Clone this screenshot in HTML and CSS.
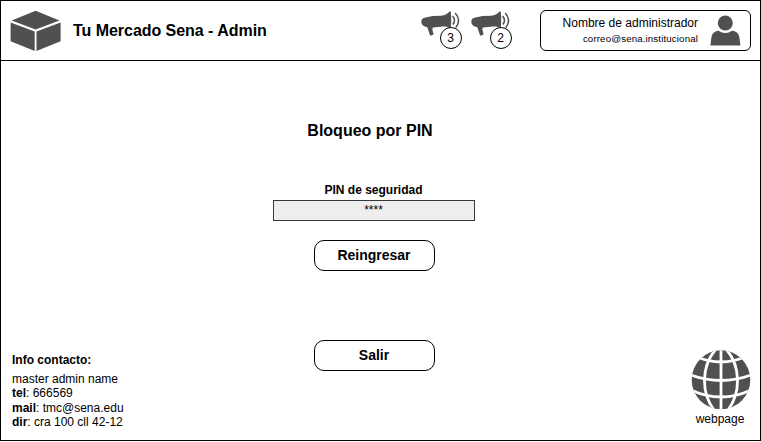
FILE: index.html
```html
<!DOCTYPE html>
<html lang="es">
<head>
<meta charset="utf-8">
<title>Tu Mercado Sena - Admin</title>
<link rel="stylesheet" href="styles.css">
</head>
<body>
<div class="frame">
  <header class="header">
    <svg class="logo" width="52" height="42" viewBox="0 0 52 42">
      <path d="M25.6 .7 49.500 10.400 25.6 19.400 1.700 10.400zM.6 12.400 24.700 21.400V40.900L.6 31.200zM26.500 21.400 50.600 12.400V31.200L26.500 40.900z"/>
    </svg>
    <h1 class="brand">Tu Mercado Sena - Admin</h1>
    <div class="alerts">
      <div class="alert">
        <svg class="horn" width="40" height="26" viewBox="0 0 40 26"><use href="#horn"/></svg>
        <span class="count">3</span>
      </div>
      <div class="alert">
        <svg class="horn" width="40" height="26" viewBox="0 0 40 26">
          <g id="horn">
            <path d="M28.800 .3C29.800 0 30.200 2 30.200 8.700S29.800 17.200 28.800 16.800C26.500 15.600 24.500 15.300 22 15.500L11.800 16.400 11.300 18.600 12.700 23.600 9.200 24.700 6.300 16.200C2.800 15.700 .5 13.800 .3 11.200.1 8.500 1.600 7.200 4.500 6.600L11.700 5.100 20 4.800C24 4.600 27 2.500 28.800 .3z"/>
            <path class="wave" d="M31.600 5Q35.200 9 31.900 13.500M34.200 2.100Q40.600 9 34.800 16.800"/>
          </g>
        </svg>
        <span class="count">2</span>
      </div>
    </div>
    <div class="profile">
      <div class="identity">
        <span class="name">Nombre de administrador</span>
        <span class="email">correo@sena.institucional</span>
      </div>
      <svg width="32" height="32" viewBox="0 0 32 32">
        <ellipse cx="15.300" cy="8" rx="7.500" ry="7.600"/>
        <path d="M8.500 15.700Q15.300 20.200 22.200 15.700C26.900 16.400 28.700 18.500 29.400 22.500L30.400 30.500H.4L1.400 22.500C2.100 18.500 4 16.400 8.500 15.700z"/>
      </svg>
    </div>
  </header>
  <div class="content">
    <address class="contact">
      <h3 class="heading">Info contacto:</h3>
      <div>master admin name</div>
      <div><b>tel</b>: 666569</div>
      <div><b>mail</b>: tmc@sena.edu</div>
      <div><b>dir</b>: cra 100 cll 42-12</div>
    </address>
    <main class="lock">
      <h2 class="title">Bloqueo por PIN</h2>
      <label class="label" for="pin">PIN de seguridad</label>
      <input class="pin" id="pin" type="text" value="****">
      <button class="button">Reingresar</button>
      <button class="button exit">Salir</button>
    </main>
    <div class="web">
      <svg width="60" height="60" viewBox="0 0 60 60">
        <defs><clipPath id="disc"><ellipse cx="30" cy="29.800" rx="29.300" ry="29.500"/></clipPath></defs>
        <g clip-path="url(#disc)">
          <path d="M0 0h60v60H0z"/>
          <path class="grid" d="M30 0V60M25 -1C10 16 10 43 23 60M35 -1C50 16 50 43 37 60M5 6.500Q30 17.500 55 6.500M0 25Q30 36 60 25M0 40Q30 54 60 40"/>
        </g>
      </svg>
      <span>webpage</span>
    </div>
  </div>
</div>
</body>
</html>
```
FILE: styles.css
```css
* { box-sizing: border-box; }
body {
  margin: 0;
  background: #fff;
  color: #000;
  font: 12px/14px "Liberation Sans", Arial, sans-serif;
}
h1, h2, h3 { margin: 0; }
svg { display: block; fill: #505050; flex: none; }
.frame {
  width: 761px;
  height: 441px;
  border: 1px solid #000;
  display: flex;
  flex-direction: column;
}
.header {
  height: 60px;
  flex: none;
  border-bottom: 1px solid #000;
  padding: 9px 9px 8px;
  display: flex;
  align-items: flex-start;
}
.brand {
  font-size: 16px;
  line-height: 18px;
  margin: 12px 0 0 11px;
  white-space: nowrap;
  letter-spacing: -0.04px;
}
.alerts { display: flex; gap: 10px; margin-left: auto; }
.alert { position: relative; width: 40px; height: 40px; }
.horn { margin-top: 1px; }
.wave { fill: none; stroke: #505050; stroke-width: 1.5; }
.count {
  position: absolute;
  left: 18.5px;
  top: 17px;
  width: 22px;
  height: 22px;
  border: 1px solid #000;
  border-radius: 50%;
  background: #fff;
  text-align: center;
  line-height: 20px;
}
.profile {
  width: 211px;
  height: 41px;
  margin-left: 29px;
  border: 1px solid #000;
  border-radius: 6px;
  padding: 4px 8px 0 0;
  display: flex;
  justify-content: flex-end;
  gap: 12px;
}
.identity {
  display: flex;
  flex-direction: column;
  align-items: flex-end;
  padding-top: 1px;
}
.name { line-height: 15px; }
.email {
  font-size: 9.7px;
  line-height: 14px;
  letter-spacing: 0.14px;
  margin-top: 1px;
}
.content {
  flex: 1;
  display: grid;
  grid-template-columns: 261px 202px 1fr;
  padding: 0 9px 0 11px;
}
.lock {
  margin-top: 61px;
  display: flex;
  flex-direction: column;
  align-items: center;
}
.title { font-size: 16px; line-height: 18px; margin-right: 8px; }
.label { font-weight: bold; margin: 43px 1px 0 0; }
.pin {
  width: 202px;
  height: 21px;
  margin-top: 3px;
  border: 1px solid #36393d;
  background: #eee;
  color: #000;
  padding: 0 1px 2px 0;
  text-align: center;
  font: inherit;
}
.button {
  width: 121px;
  height: 31px;
  margin-top: 19px;
  padding: 0 0 2px;
  border: 1px solid #000;
  border-radius: 10px;
  background: #fff;
  color: #000;
  font: bold 14px/16px "Liberation Sans", Arial, sans-serif;
}
.exit { margin-top: 69px; }
.contact {
  align-self: end;
  margin-bottom: 10.6px;
  font-style: normal;
  line-height: 14.4px;
}
.heading { font-size: 12px; line-height: 14px; margin-bottom: 4.4px; }
.web {
  align-self: end;
  justify-self: end;
  margin-bottom: 14px;
  display: flex;
  flex-direction: column;
  align-items: center;
  gap: 2px;
}
.web span { margin-right: 2px; }
.grid { fill: none; stroke: #fff; stroke-width: 2.8; }
```
